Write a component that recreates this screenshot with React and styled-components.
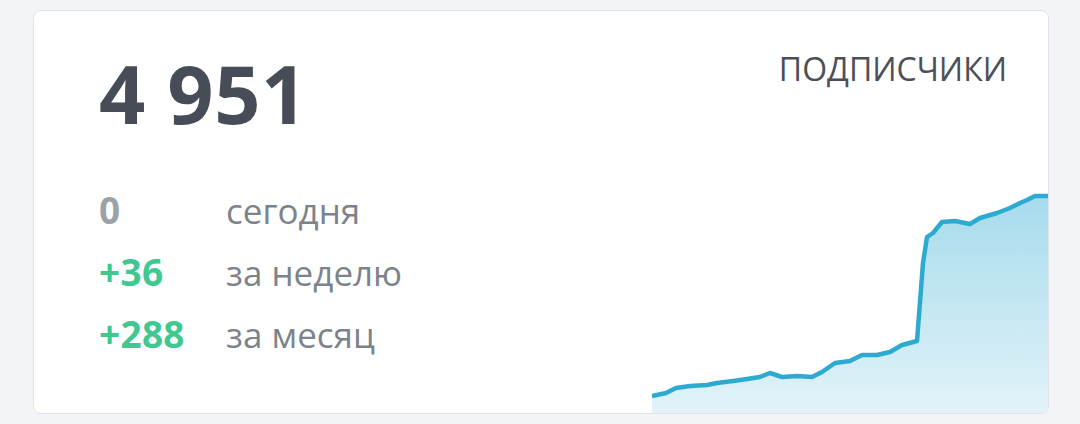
import React from 'react';
import styled, { createGlobalStyle } from 'styled-components';

const GlobalStyle = createGlobalStyle`
  html, body {
    margin: 0;
    padding: 0;
    background: #f3f4f7;
  }
  body {
    font-family: "Open Sans", "Noto Sans", "DejaVu Sans", sans-serif;
  }
`;

const Page = styled.div`
  box-sizing: border-box;
  height: 424px;
  padding: 10px 31px 10px 33px;
`;

const Card = styled.div`
  box-sizing: border-box;
  height: 404px;
  display: flex;
  background: #ffffff;
  border: 1.5px solid #e1e3e8;
  border-radius: 8px;
  overflow: hidden;
`;

const Left = styled.div`
  flex: 1;
  padding: 41px 0 0 65px;
  display: flex;
  flex-direction: column;
`;

const Total = styled.div`
  font-size: 81px;
  line-height: 1;
  font-weight: 700;
  color: #474d57;
  letter-spacing: 0.5px;
`;

const Stats = styled.div`
  margin-top: 46px;
  display: flex;
  flex-direction: column;
`;

const Row = styled.div`
  display: flex;
  align-items: baseline;
  line-height: 61px;
`;

const Delta = styled.span`
  min-width: 127px;
  font-size: 37px;
  font-weight: 700;
  letter-spacing: 0.3px;
  color: ${(p) => (p.$zero ? '#9ba3aa' : '#3fc88f')};
`;

const Label = styled.span`
  font-size: 35px;
  color: #7d838c;
`;

const Right = styled.div`
  width: 396px;
  display: flex;
  flex-direction: column;
  justify-content: space-between;
`;

const Title = styled.div`
  align-self: flex-end;
  margin: 42px 41px 0 0;
  font-size: 32px;
  line-height: 1;
  font-weight: 400;
  color: #4b5058;
`;

const Chart = styled.svg`
  display: block;
  width: 396px;
  height: 222px;
`;

const points = [
  [0, 205], [14, 202], [24, 197], [38, 195], [55, 194], [65, 192], [81, 190],
  [95, 188], [108, 186], [118, 182], [130, 186], [145, 185], [160, 186],
  [170, 181], [183, 172], [198, 170], [210, 164], [225, 164], [238, 161],
  [250, 154], [265, 150], [271, 72], [275, 46], [281, 42], [290, 31],
  [303, 30], [318, 33], [328, 27], [345, 22], [358, 17], [368, 12],
  [375, 9], [383, 5], [396, 5],
];

const stats = [
  { value: '0', label: 'сегодня', zero: true },
  { value: '+36', label: 'за неделю' },
  { value: '+288', label: 'за месяц' },
];

const Sparkline = () => {
  const line = points.map(([x, y], i) => `${i ? 'L' : 'M'}${x} ${y}`).join(' ');
  const area = `${line} L396 222 L0 222 Z`;
  return (
    <Chart viewBox="0 0 396 222" preserveAspectRatio="none">
      <defs>
        <linearGradient id="subsFill" x1="0" y1="0" x2="0" y2="1">
          <stop offset="0" stopColor="#a6dbeb" />
          <stop offset="1" stopColor="#e2f3f9" />
        </linearGradient>
      </defs>
      <path d={area} fill="url(#subsFill)" />
      <path d={line} fill="none" stroke="#2caad1" strokeWidth="4.5" strokeLinejoin="round" />
    </Chart>
  );
};

const App = () => {
  return (
    <Page>
      <GlobalStyle />
      <Card>
        <Left>
          <Total>4 951</Total>
          <Stats>
            {stats.map((s) => (
              <Row key={s.label}>
                <Delta $zero={s.zero}>{s.value}</Delta>
                <Label>{s.label}</Label>
              </Row>
            ))}
          </Stats>
        </Left>
        <Right>
          <Title>ПОДПИСЧИКИ</Title>
          <Sparkline />
        </Right>
      </Card>
    </Page>
  );
};

export default App;
